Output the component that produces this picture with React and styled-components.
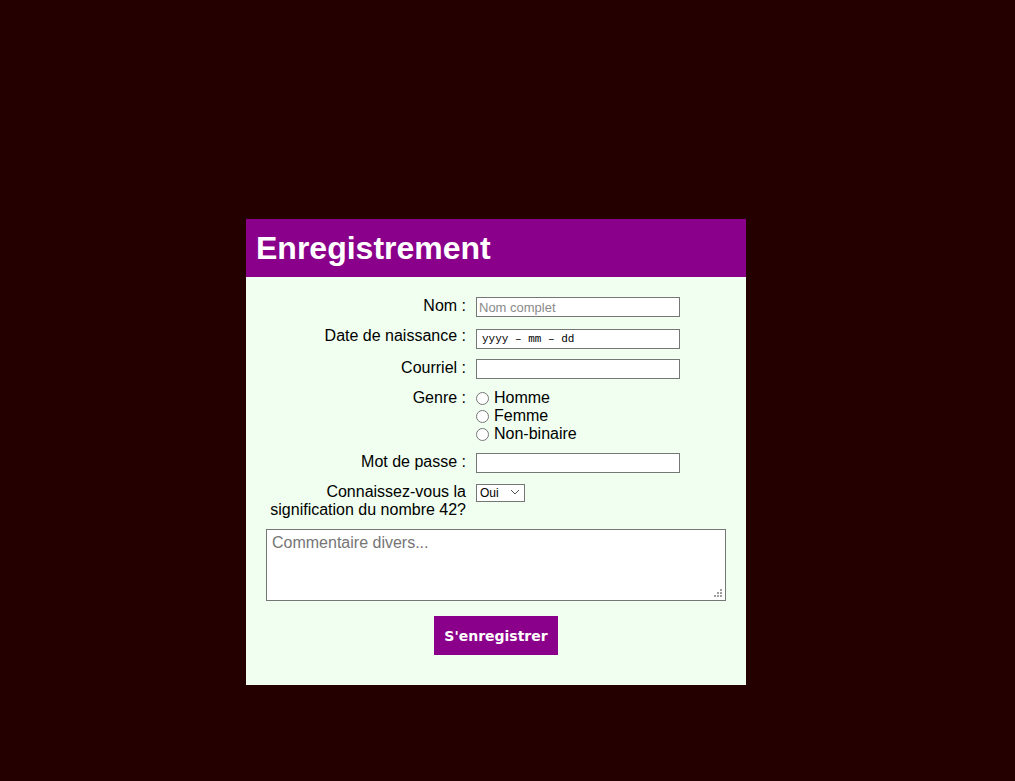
import React from 'react';
import styled, { createGlobalStyle } from 'styled-components';

const GlobalStyle = createGlobalStyle`
    html, body {
        margin: 0;
        padding: 0;
        background: #250000;
        font-family: "Liberation Sans", Arial, sans-serif;
    }
`;

const Page = styled.div`
    min-height: 781px;
    box-sizing: border-box;
    padding: 219px 0 0 246px;
`;

const Card = styled.div`
    width: 500px;
    background: #f0fff0;
`;

const Header = styled.h1`
    margin: 0;
    height: 58px;
    line-height: 58px;
    padding: 0 10px;
    background: #8b008b;
    color: white;
    font-size: 32px;
    font-weight: bold;
`;

const Form = styled.form`
    display: grid;
    grid-template-columns: 200px 1fr;
    column-gap: 10px;
    row-gap: 10px;
    padding: 20px 20px 30px;
    align-items: start;
`;

const Label = styled.label`
    text-align: right;
    font-size: 16px;
    line-height: 18px;
    color: black;
    margin-top: ${p => p.$shift || 0}px;
`;

const TextInput = styled.input`
    box-sizing: border-box;
    width: 204px;
    height: 20px;
    margin: 0 0 ${p => p.$extra || 0}px;
    padding: 1px 2px;
    border: 1px solid #767676;
    background: white;
    font-family: "Liberation Sans", Arial, sans-serif;
    font-size: 13px;
    color: black;
    outline: none;
    &::placeholder {
        color: #8a8a8a;
    }
`;

const DateInput = styled(TextInput)`
    font-family: "Liberation Mono", "Courier New", monospace;
    font-size: 11px;
    padding-left: 5px;
`;

const RadioList = styled.div`
    display: flex;
    flex-direction: column;
`;

const RadioLine = styled.label`
    display: flex;
    align-items: center;
    font-size: 16px;
    line-height: 18px;
    color: black;
`;

const Radio = styled.input`
    width: 13px;
    height: 13px;
    margin: 0 5px 0 0;
`;

const SelectWrap = styled.div`
    position: relative;
    width: 49px;
    height: 18px;
`;

const Select = styled.select`
    appearance: none;
    box-sizing: border-box;
    width: 49px;
    height: 18px;
    margin: 0;
    padding: 0 0 0 3px;
    border: 1px solid #767676;
    border-radius: 0;
    background: white;
    font-family: "Liberation Sans", Arial, sans-serif;
    font-size: 12px;
    color: black;
`;

const Chevron = styled.svg`
    position: absolute;
    right: 5px;
    top: 6px;
    pointer-events: none;
`;

const CommentWrap = styled.div`
    grid-column: 1 / -1;
    position: relative;
    height: 72px;
`;

const Comment = styled.textarea`
    box-sizing: border-box;
    display: block;
    width: 460px;
    height: 72px;
    margin: 0;
    padding: 4px 5px;
    border: 1px solid #767676;
    background: white;
    font-family: "Liberation Sans", Arial, sans-serif;
    font-size: 16px;
    outline: none;
    resize: none;
    &::placeholder {
        color: #757575;
    }
`;

const Grip = styled.svg`
    position: absolute;
    right: 4px;
    bottom: 4px;
    pointer-events: none;
`;

const Actions = styled.div`
    grid-column: 1 / -1;
    display: flex;
    justify-content: center;
    margin-top: 5px;
`;

const Submit = styled.button`
    height: 39px;
    padding: 0 10px;
    border: none;
    background: #8b008b;
    color: white;
    font-family: "DejaVu Sans", Verdana, sans-serif;
    font-weight: bold;
    font-size: 14px;
    cursor: pointer;
`;

export default function App() {
    return (
        <>
            <GlobalStyle />
            <Page>
                <Card>
                    <Header>Enregistrement</Header>
                    <Form onSubmit={e => e.preventDefault()}>
                        <Label htmlFor="nom">Nom :</Label>
                        <TextInput id="nom" placeholder="Nom complet" $extra={2} />

                        <Label htmlFor="naissance" $shift={-2}>Date de naissance :</Label>
                        <DateInput id="naissance" defaultValue="yyyy – mm – dd" readOnly />

                        <Label htmlFor="courriel">Courriel :</Label>
                        <TextInput id="courriel" />

                        <Label>Genre :</Label>
                        <RadioList>
                            {["Homme", "Femme", "Non-binaire"].map(g => (
                                <RadioLine key={g}>
                                    <Radio type="radio" name="genre" value={g} />
                                    {g}
                                </RadioLine>
                            ))}
                        </RadioList>

                        <Label htmlFor="mdp">Mot de passe :</Label>
                        <TextInput id="mdp" type="password" />

                        <Label htmlFor="q42">Connaissez-vous la<br />signification du nombre 42?</Label>
                        <SelectWrap>
                            <Select id="q42" defaultValue="oui">
                                <option value="oui">Oui</option>
                                <option value="non">Non</option>
                            </Select>
                            <Chevron width="10" height="6" viewBox="0 0 10 6">
                                <path d="M1 1l4 4 4-4" fill="none" stroke="#555" strokeWidth="1" />
                            </Chevron>
                        </SelectWrap>

                        <CommentWrap>
                            <Comment placeholder="Commentaire divers..." />
                            <Grip width="8" height="8" viewBox="0 0 8 8">
                                <g fill="#a0a0a0">
                                    <rect x="6" y="0" width="2" height="2" />
                                    <rect x="3" y="3" width="2" height="2" />
                                    <rect x="6" y="3" width="2" height="2" />
                                    <rect x="0" y="6" width="2" height="2" />
                                    <rect x="3" y="6" width="2" height="2" />
                                    <rect x="6" y="6" width="2" height="2" />
                                </g>
                            </Grip>
                        </CommentWrap>

                        <Actions>
                            <Submit type="submit">S'enregistrer</Submit>
                        </Actions>
                    </Form>
                </Card>
            </Page>
        </>
    );
}
